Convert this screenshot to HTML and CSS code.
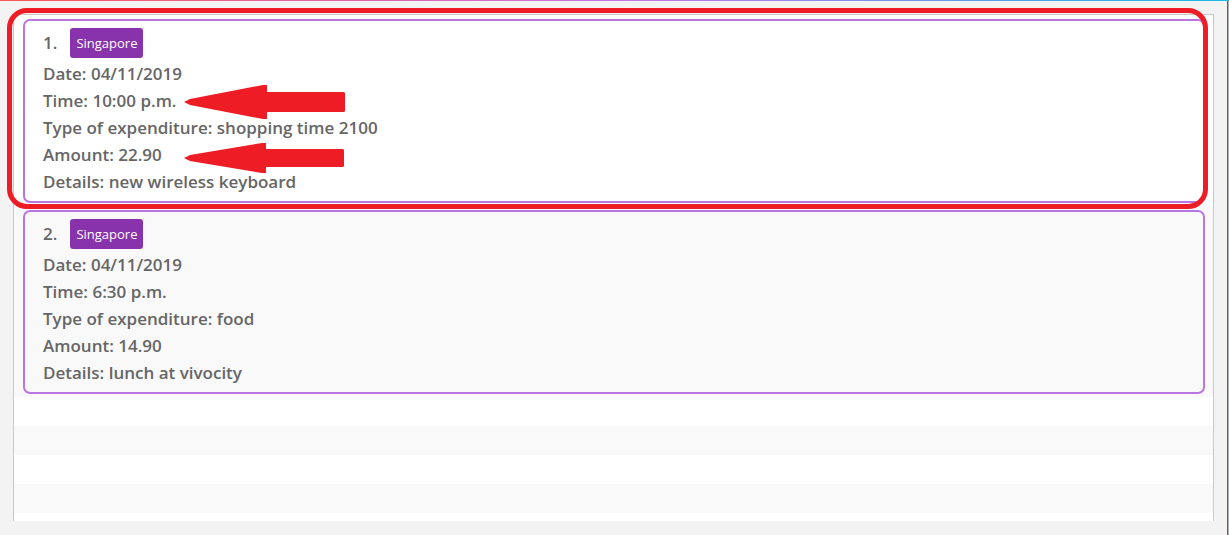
FILE: index.html
```html
<!DOCTYPE html>
<html lang="en">
<head>
<meta charset="utf-8">
<title>Expenditures</title>
<link rel="stylesheet" href="styles.css">
</head>
<body>
<main class="panel">
  <ul class="list">
    <li class="row">
      <article class="card">
        <header class="card-head"><span>1.</span><span class="tag">Singapore</span></header>
        <p class="line">Date: 04/11/2019</p>
        <p class="line">Time: 10:00 p.m.</p>
        <p class="line">Type of expenditure: shopping time 2100</p>
        <p class="line">Amount: 22.90</p>
        <p class="line">Details: new wireless keyboard</p>
      </article>
      <div class="highlight"></div>
      <svg class="arrow arrow-time" width="162" height="35" viewBox="0 0 162 35" aria-hidden="true"><path d="M0 17L6 14L79 0H83V7H160L161 8V26L160 27H83V34H79L6 20Z"/></svg>
      <svg class="arrow arrow-amount" width="161" height="31" viewBox="0 0 161 31" aria-hidden="true"><path d="M0 15L6 12L78 0H82V6H159L160 7V23L159 24H82V30H78L6 18Z"/></svg>
    </li>
    <li class="row">
      <article class="card">
        <header class="card-head"><span>2.</span><span class="tag">Singapore</span></header>
        <p class="line">Date: 04/11/2019</p>
        <p class="line">Time: 6:30 p.m.</p>
        <p class="line">Type of expenditure: food</p>
        <p class="line">Amount: 14.90</p>
        <p class="line">Details: lunch at vivocity</p>
      </article>
    </li>
    <li class="row empty"></li>
    <li class="row empty"></li>
    <li class="row empty"></li>
    <li class="row empty"></li>
    <li class="row empty"></li>
  </ul>
</main>
</body>
</html>
```
FILE: styles.css
```css
* {
  box-sizing: border-box;
}

body {
  margin: 0;
  background: #f3f3f3;
  color: #666;
  font-family: "Open Sans", "Noto Sans", sans-serif;
  font-size: 17px;
  font-weight: 600;
}

.panel {
  display: flex;
  height: 100vh;
  padding: 13px 13px 14px;
  border-top: 1px solid;
  border-image: linear-gradient(to right, #fc5457, #c873e8 51%, #12bce6) 1;
  border-width: 1px 0 0;
  box-shadow: inset -1px 0 #a8adb2, inset -2px 0 #59626b;
}

.list {
  flex: 1;
  margin: 0 2px 0 0;
  padding: 0;
  list-style: none;
  background: #fff;
  border: 1px solid #c8c8c8;
  border-bottom: 0;
  clip-path: inset(-10px -10px 0 -10px);
}

.row {
  position: relative;
  padding: 4px 8px 3px 9px;
  background: #fff;
}

.row:nth-child(even) {
  background: #f9f9f9;
}

.row:first-child {
  z-index: 1;
}

.empty {
  height: 29px;
}

.card {
  padding: 7px 18px 6px;
  border: 2px solid #bb75e2;
  border-radius: 7px;
}

.card-head {
  display: flex;
  align-items: flex-start;
  gap: 13px;
  height: 32px;
  line-height: 30px;
}

.tag {
  padding: 0 6px;
  border-radius: 3px;
  background: #8833ab;
  color: #fff;
  font-size: 13px;
  font-weight: 400;
}

.line {
  margin: 0;
  line-height: 27px;
}

.highlight {
  position: absolute;
  inset: -7px 5px -3px -7px;
  border: 5px solid #ee1c24;
  border-radius: 20px;
}

.arrow {
  position: absolute;
  left: 170px;
  fill: #ee1c24;
}

.arrow-time {
  top: 70px;
}

.arrow-amount {
  top: 128px;
}
```
